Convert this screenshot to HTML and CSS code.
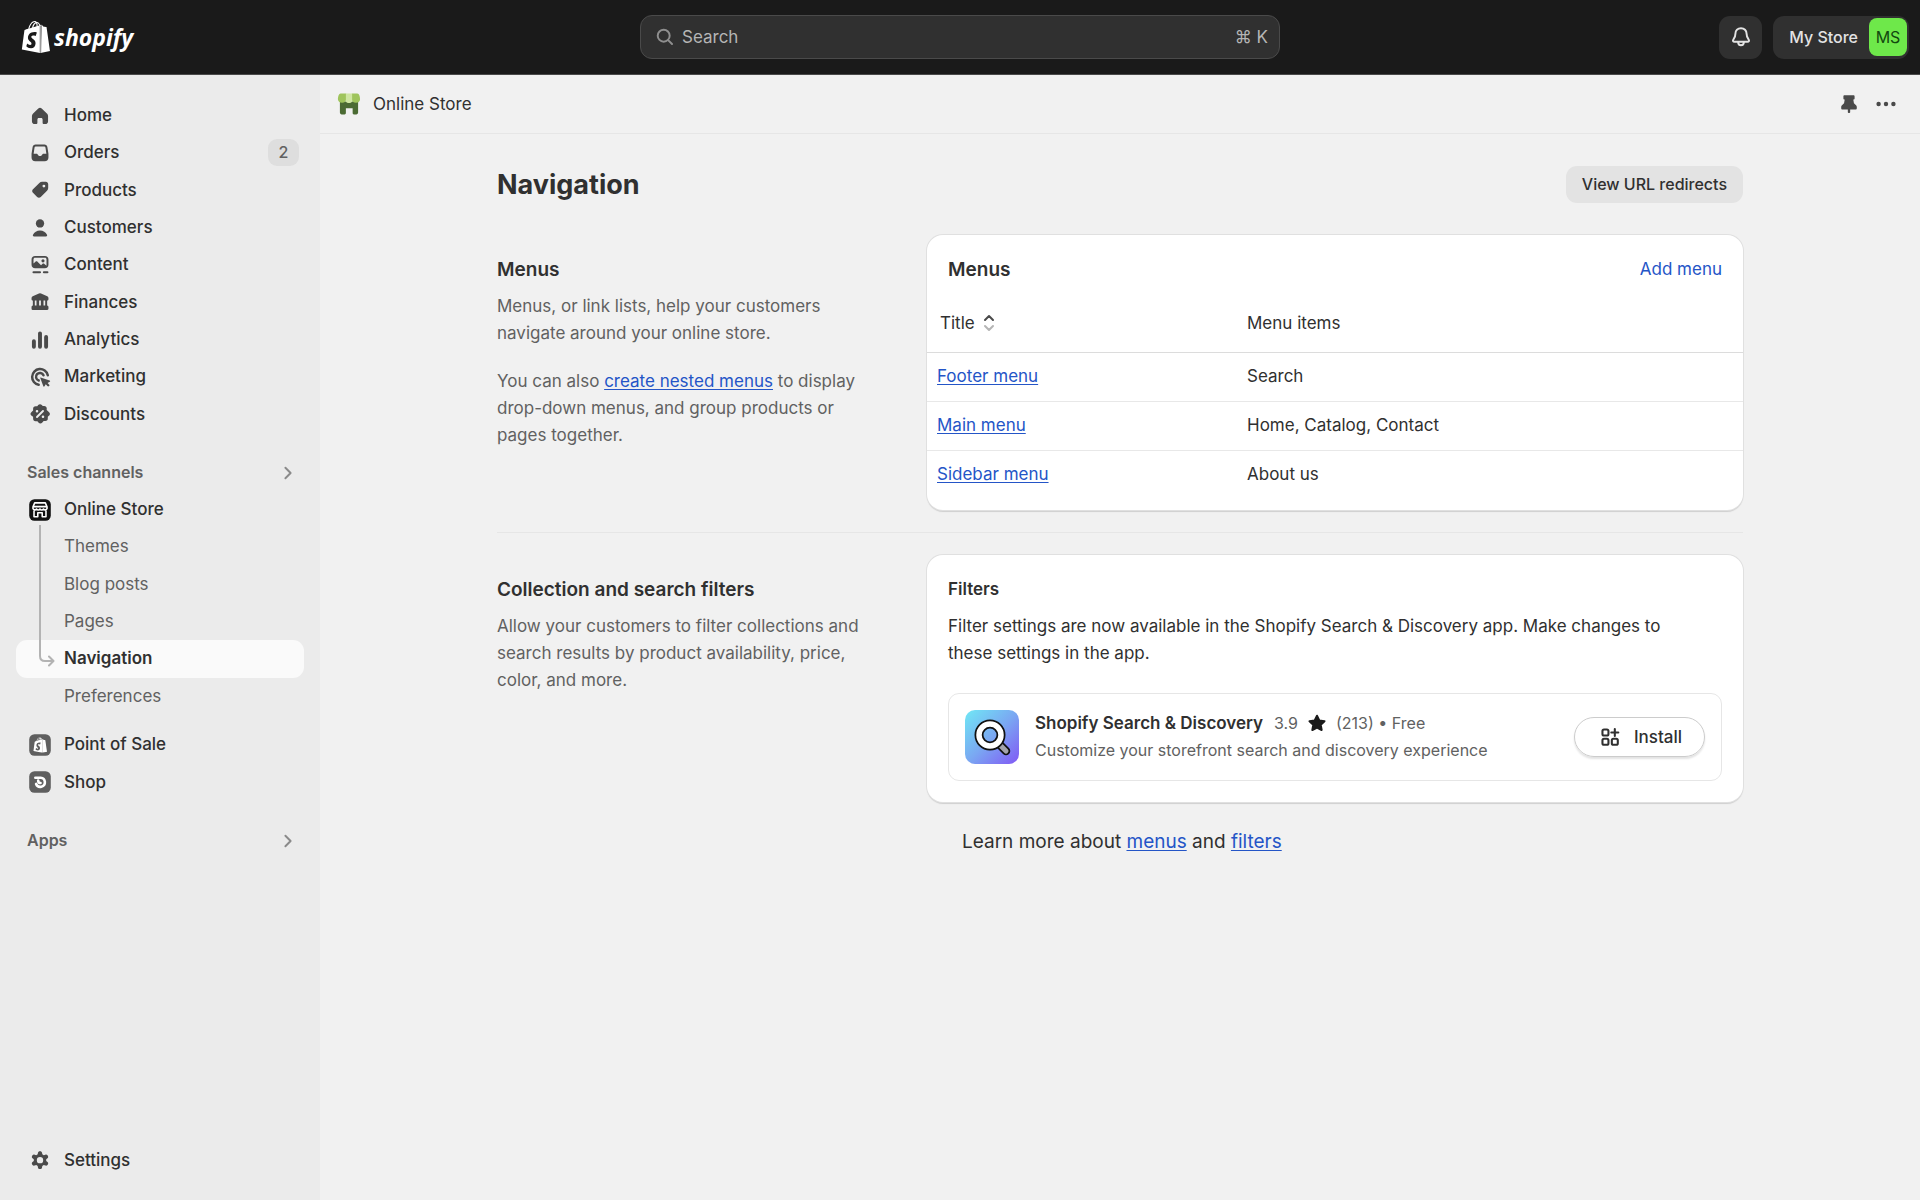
FILE: index.html
```html
<!DOCTYPE html>
<html lang="en">
<head>
<meta charset="utf-8">
<meta name="viewport" content="width=device-width, initial-scale=1">
<title>Navigation · My Store · Shopify</title>
<link rel="stylesheet" href="styles.css">
</head>
<body>
<svg class="sprite" aria-hidden="true">
  <symbol id="bag" viewBox="0 0 24 24">
    <path d="M15.337 23.979l7.216-1.561s-2.604-17.613-2.625-17.73c-.018-.116-.114-.192-.211-.192s-1.929-.136-1.929-.136-1.275-1.274-1.439-1.411c-.045-.037-.075-.057-.121-.074l-.914 21.104h.023zM11.71 11.305s-.81-.424-1.774-.424c-1.447 0-1.504.906-1.504 1.141 0 1.232 3.24 1.715 3.24 4.629 0 2.295-1.44 3.76-3.406 3.76-2.354 0-3.54-1.465-3.54-1.465l.646-2.086s1.245 1.066 2.28 1.066c.675 0 .975-.545.975-.932 0-1.619-2.654-1.694-2.654-4.359-.034-2.237 1.571-4.416 4.827-4.416 1.257 0 1.875.361 1.875.361l-.945 2.715-.02.01zM11.17.83c.136 0 .271.038.405.135-.984.465-2.064 1.639-2.508 3.992-.656.213-1.293.405-1.889.578C7.697 3.75 8.951.84 11.17.84V.83zm1.235 2.949v.135c-.754.232-1.583.484-2.394.736.466-1.777 1.333-2.645 2.085-2.971.193.501.309 1.176.309 2.1zm.539-2.234c.694.074 1.141.867 1.429 1.755-.349.114-.735.231-1.158.366v-.252c0-.752-.096-1.371-.271-1.871v.002zm2.992 1.289c-.02 0-.06.021-.078.021s-.289.075-.714.21c-.423-1.233-1.176-2.37-2.508-2.37h-.115C12.135.209 11.669 0 11.265 0 8.159 0 6.675 3.877 6.21 5.846c-1.194.365-2.063.636-2.16.674-.675.213-.694.232-.772.87-.075.462-1.83 14.063-1.83 14.063L15.009 24l.927-21.166z"/>
  </symbol>
  <symbol id="chevron" viewBox="0 0 20 20">
    <path d="M8 6l4 4-4 4" fill="none" stroke="currentColor" stroke-width="1.5" stroke-linecap="round" stroke-linejoin="round"/>
  </symbol>
</svg>

<header class="header">
  <a class="brand" href="#" aria-label="Shopify home">
    <svg class="brand-bag" viewBox="0 0 24 24" aria-hidden="true"><use href="#bag"/><path d="M14.700 3.300h1.800l-.6 20.300-1.200.3z" fill="#9a9a9a"/></svg>
    <span class="brand-name">shopify</span>
  </a>
  <label class="search">
    <svg class="icon" viewBox="0 0 20 20" aria-hidden="true"><g fill="none" stroke="currentColor" stroke-width="1.500" stroke-linecap="round"><circle cx="9" cy="9" r="4.600"/><path d="M12.400 12.400l3 3"/></g></svg>
    <input type="search" placeholder="Search" aria-label="Search">
    <kbd>⌘ K</kbd>
  </label>
  <div class="header-actions">
    <button class="bell" type="button" aria-label="Notifications">
      <svg class="icon" viewBox="0 0 20 20" aria-hidden="true"><g fill="none" stroke="currentColor" stroke-width="1.500" stroke-linejoin="round"><path d="M10 3.200c-2.500 0-4.300 1.900-4.300 4.300 0 2.400-.5 3.100-1.500 4.300-.8 1-.3 1.900.8 1.900h10c1.100 0 1.600-.9.800-1.900-1-1.200-1.500-1.900-1.500-4.300 0-2.400-1.800-4.300-4.300-4.300z"/><path d="M7.800 13.800c0 1.500.9 2.500 2.200 2.500s2.200-1 2.200-2.500"/></g></svg>
    </button>
    <button class="store" type="button"><span>My Store</span><span class="avatar">MS</span></button>
  </div>
</header>

<div class="shell">
  <nav class="sidebar" aria-label="Main">
    <ul class="nav nav-main">
      <li><a href="#"><svg class="icon" viewBox="0 0 20 20" aria-hidden="true"><path d="M8.700 4.200a1.900 1.900 0 0 1 2.600 0l4 3.800c.6.500.9 1.300.9 2v4c0 1.300-.8 2.200-2.200 2.200h-1c-.6 0-1-.4-1-1v-2.400c0-.8-.4-1.300-1.100-1.300h-1.800c-.7 0-1.100.5-1.100 1.300v2.400c0 .6-.4 1-1 1H6c-1.400 0-2.200-.9-2.200-2.200v-4c0-.7.3-1.500.9-2z"/></svg>Home</a></li>
      <li><a href="#"><svg class="icon" viewBox="0 0 20 20" aria-hidden="true"><path fill-rule="evenodd" d="M6.600 3.500h6.800c1.200 0 2.100.8 2.300 2l.8 5v3c0 1.700-1.100 2.900-2.900 2.900H6.400c-1.800 0-2.900-1.200-2.900-2.900v-3l.8-5c.2-1.200 1.100-2 2.300-2zM6.700 5c-.5 0-.8.300-.9.800l-.7 4.700h2c.8 0 1 .3 1.300.9.300.7.800 1 1.600 1s1.300-.3 1.600-1c.3-.6.5-.9 1.300-.9h2l-.7-4.700c-.1-.5-.4-.8-.9-.8z"/></svg>Orders<span class="badge">2</span></a></li>
      <li><a href="#"><svg class="icon" viewBox="0 0 20 20" aria-hidden="true"><path fill-rule="evenodd" d="M11.600 3.700h2.900c1 0 1.800.8 1.800 1.800v2.900c0 .8-.3 1.500-.9 2.100l-4.800 4.900c-.8.800-2 .8-2.800 0l-3.200-3.200c-.8-.8-.8-2 0-2.800l4.900-4.800c.6-.6 1.300-.9 2.100-.9zm1.400 4.400a1.100 1.100 0 1 0 0-2.200 1.100 1.100 0 0 0 0 2.200z"/></svg>Products</a></li>
      <li><a href="#"><svg class="icon" viewBox="0 0 20 20" aria-hidden="true"><circle cx="10" cy="6.500" r="3.200"/><path d="M4.600 15.200c.9-2 3-3.300 5.400-3.300s4.500 1.300 5.400 3.300c.3.700-.1 1.300-.8 1.300H5.400c-.7 0-1.100-.6-.8-1.300z"/></svg>Customers</a></li>
      <li><a href="#"><svg class="icon" viewBox="0 0 20 20" aria-hidden="true"><path fill-rule="evenodd" d="M6.200 3h7.600c1.600 0 2.700 1.100 2.700 2.700v4.100c0 1.600-1.100 2.700-2.700 2.700H6.200c-1.600 0-2.700-1.100-2.700-2.700V5.700C3.500 4.100 4.600 3 6.200 3zm0 1.500c-.7 0-1.200.5-1.200 1.200v3.100l1.500-1.300c.5-.4 1.100-.4 1.600 0l2.700 2.600 1-.9c.5-.4 1.100-.4 1.600 0l1.600 1.300V5.700c0-.7-.5-1.200-1.200-1.200z"/><circle cx="12.300" cy="6.800" r="1.200"/><path d="M5 15.600h5M13 15.600h2.700" stroke="currentColor" stroke-width="1.600" stroke-linecap="round"/></svg>Content</a></li>
      <li><a href="#"><svg class="icon" viewBox="0 0 20 20" aria-hidden="true"><path d="M9.200 3.500a2 2 0 0 1 1.600 0l4.800 2.100c.6.300.9.700.9 1.300v.9c0 .6-.4 1-1 1v3.900c.6.100 1 .6 1 1.200v1.300c0 .5-.4.900-.9.900H4.400a.9.900 0 0 1-.9-.9v-1.300c0-.6.400-1.100 1-1.200V8.800c-.6 0-1-.4-1-1v-.9c0-.6.300-1 .9-1.300zM6 8.800v3.900h1.300V8.800zm3.300 0v3.900h1.400V8.800zm3.400 0v3.900H14V8.800z"/></svg>Finances</a></li>
      <li><a href="#"><svg class="icon" viewBox="0 0 20 20" aria-hidden="true"><path d="M5.300 11v4.200M10 4.900v10.300M14.700 7.700v7.500" stroke="currentColor" stroke-width="3" stroke-linecap="round"/></svg>Analytics</a></li>
      <li><a href="#"><svg class="icon" viewBox="0 0 20 20" aria-hidden="true"><g fill="none" stroke="currentColor" stroke-width="1.900" stroke-linecap="round"><path d="M16 8.600A6.100 6.100 0 1 0 9 16"/><path d="M12.700 8.700A3 3 0 1 0 9 12.700"/></g><path d="M10.500 10.400l6.900 2.300c.5.200.6.800.1 1l-1.700.9 1.300 1.400c.4.400.1 1-.4 1.200-.4.200-.7.100-1-.2l-1.300-1.400-.9 1.500c-.3.500-.9.400-1-.1l-2.300-6.200c-.1-.3 0-.5.300-.4z"/></svg>Marketing</a></li>
      <li><a href="#"><svg class="icon" viewBox="0 0 20 20" aria-hidden="true"><path d="M8.600 3.100c.8-.9 2-.9 2.800 0l.7.800 1.100-.1c1.200 0 2 .8 2 2l-.1 1.100.9.700c1.200 1 1.800 1.600 1.600 2.500-.1.500-.4.900-.8 1.300l-.8.800v1.100c.1 1.300-.6 2.100-1.900 2.100h-1.300l-1 1.100c-.9 1.100-2.100 1.100-3 0l-.8-1H6.600c-1.200 0-2-.8-1.900-2v-1.300l-1.200-.9c-1.100-.9-1.100-2 0-2.900l1.200-1V6.200c-.1-1.400.6-2.200 2-2.200h1.200z"/><g stroke="#ebebeb" fill="#ebebeb" stroke-linecap="round"><path d="M7.700 12.300l4.600-4.600" stroke-width="1.500"/><circle cx="7.700" cy="7.900" r=".5"/><circle cx="12.300" cy="12.100" r=".5"/></g></svg>Discounts</a></li>
    </ul>

    <button class="group" type="button">Sales channels<svg class="icon" aria-hidden="true"><use href="#chevron"/></svg></button>
    <ul class="nav nav-store">
      <li><a href="#"><svg class="icon" viewBox="0 0 20 20" aria-hidden="true"><rect x="1.700" y="1.700" width="16.600" height="16.600" rx="4" fill="#111"/><g fill="none" stroke="#fff" stroke-width="1.200" stroke-linejoin="round"><path d="M5.900 4.500h8.200l1.300 3v1.300a1.500 1.500 0 0 1-2.700.4 1.600 1.600 0 0 1-2.700 0 1.600 1.600 0 0 1-2.700 0 1.500 1.500 0 0 1-2.700-.4V7.500zM4.800 7.400h10.400M5.400 9.900v5.300h2.900v-3.100h3.400v3.100h2.900V9.900"/></g></svg>Online Store</a></li>
      <li class="sub"><a href="#">Themes</a></li>
      <li class="sub"><a href="#">Blog posts</a></li>
      <li class="sub"><a href="#">Pages</a></li>
      <li class="sub current"><a href="#" aria-current="page">Navigation</a>
        <svg class="trail" viewBox="0 0 18 142" aria-hidden="true"><path d="M2 0v131q0 5 5 5h8M11 131.500l4.500 4.500-4.500 4.500" fill="none" stroke="#b3b3b3" stroke-width="2" stroke-linecap="round" stroke-linejoin="round"/></svg>
      </li>
      <li class="sub"><a href="#">Preferences</a></li>
    </ul>
    <ul class="nav nav-channels">
      <li><a href="#"><svg class="icon" viewBox="0 0 20 20" aria-hidden="true"><rect x="1.700" y="1.700" width="16.600" height="16.600" rx="4" fill="#5f5f5f"/><use href="#bag" x="4.300" y="4" width="11.800" height="12" fill="#fff"/></svg>Point of Sale</a></li>
      <li><a href="#"><svg class="icon" viewBox="0 0 20 20" aria-hidden="true"><rect x="1.700" y="1.700" width="16.600" height="16.600" rx="4" fill="#5f5f5f"/><path d="M6.400 6.700h4.100a3.500 3.500 0 1 1-3.500 4.800M8.600 8.800q0 2 1.800 2" fill="none" stroke="#fff" stroke-width="2" stroke-linecap="round"/></svg>Shop</a></li>
    </ul>
    <button class="group" type="button">Apps<svg class="icon" aria-hidden="true"><use href="#chevron"/></svg></button>
    <ul class="nav nav-foot">
      <li><a href="#"><svg class="icon" viewBox="1 1 18 18" aria-hidden="true"><path fill-rule="evenodd" d="M8.600 4.300c.1-.7.600-1.100 1.200-1.100h.4c.6 0 1.100.4 1.200 1.100l.2 1.100 1 .6 1.100-.4c.6-.2 1.200 0 1.500.5l.3.400c.3.600.2 1.200-.3 1.600l-.9.700v1.200l.9.700c.5.400.6 1 .3 1.600l-.3.400c-.3.500-.9.700-1.500.5l-1.100-.4-1 .6-.2 1.100c-.1.700-.6 1.100-1.200 1.100h-.4c-.6 0-1.100-.4-1.200-1.100l-.2-1.100-1-.6-1.100.4c-.6.200-1.200 0-1.500-.5l-.3-.4c-.3-.6-.2-1.200.3-1.600l.9-.7V8.800l-.9-.7c-.5-.4-.6-1-.3-1.600l.3-.4c.3-.5.9-.7 1.500-.5l1.100.4 1-.6zM10 11.600a2.200 2.200 0 1 0 0-4.400 2.200 2.200 0 0 0 0 4.400z"/></svg>Settings</a></li>
    </ul>
  </nav>

  <main class="main">
    <div class="titlebar">
      <svg class="icon" viewBox="0 0 20 20" aria-hidden="true"><path d="M3 8h14v8.600c0 .9-.6 1.400-1.400 1.400h-1.800c-.6 0-1-.4-1-1v-3.700H7.600V17c0 .6-.4 1-1 1H4.400c-.8 0-1.400-.5-1.400-1.400z" fill="#4b6b33"/><path d="M3.600 2h4.200v4.500a3.200 2.900 0 0 1-6.300.200c0-2 .6-4.700 2.100-4.700z" fill="#9fc45c"/><path d="M16.400 2h-4.200v4.500a3.200 2.900 0 0 0 6.300.200c0-2-.6-4.700-2.100-4.700z" fill="#9fc45c"/><path d="M7.600 2h4.800v6c-1 1.700-3.800 1.700-4.800 0z" fill="#cfe6a2"/></svg>
      <span>Online Store</span>
      <div class="titlebar-tools">
        <button type="button" aria-label="Pin"><svg class="icon" viewBox="0 0 20 20" aria-hidden="true"><path d="M6.500 3.300h7c.5 0 .8.400.8.800v1.700c0 .5-.3.800-.8.800h-.2l.5 2.900 1.600 1.500c.4.400.6.900.6 1.400v.9c0 .6-.4 1-1 1h-4.100v1.800c0 .5-.4.900-.9.900s-.9-.4-.9-.9v-1.800H5c-.6 0-1-.4-1-1v-.9c0-.5.200-1 .6-1.400l1.600-1.500.5-2.900h-.2c-.5 0-.8-.3-.8-.8V4.100c0-.4.300-.8.800-.8z"/></svg></button>
        <button type="button" aria-label="More actions"><svg class="icon" viewBox="0 0 20 20" aria-hidden="true"><circle cx="4.300" cy="10" r="1.700"/><circle cx="10" cy="10" r="1.700"/><circle cx="15.700" cy="10" r="1.700"/></svg></button>
      </div>
    </div>

    <div class="page">
      <div class="page-head">
        <h1>Navigation</h1>
        <button class="btn-secondary" type="button">View URL redirects</button>
      </div>

      <section class="annotated">
        <div class="about">
          <h2>Menus</h2>
          <p>Menus, or link lists, help your customers navigate around your online store.</p>
          <p>You can also <a href="#">create nested menus</a> to display drop-down menus, and group products or pages together.</p>
        </div>
        <div class="card card-menus">
          <div class="card-head">
            <h2>Menus</h2>
            <a class="plain" href="#">Add menu</a>
          </div>
          <table>
            <thead>
              <tr>
                <th scope="col"><button class="sort" type="button">Title<svg viewBox="0 0 12 18" aria-hidden="true"><g fill="none" stroke-width="2" stroke-linecap="round" stroke-linejoin="round"><path d="M2 6l4-4 4 4" stroke="#4a4a4a"/><path d="M2 12l4 4 4-4" stroke="#b5b5b5"/></g></svg></button></th>
                <th scope="col">Menu items</th>
              </tr>
            </thead>
            <tbody>
              <tr><td><a href="#">Footer menu</a></td><td>Search</td></tr>
              <tr><td><a href="#">Main menu</a></td><td>Home, Catalog, Contact</td></tr>
              <tr><td><a href="#">Sidebar menu</a></td><td>About us</td></tr>
            </tbody>
          </table>
        </div>
      </section>

      <section class="annotated">
        <div class="about">
          <h2>Collection and search filters</h2>
          <p>Allow your customers to filter collections and search results by product availability, price, color, and more.</p>
        </div>
        <div class="card card-filters">
          <h3>Filters</h3>
          <p class="card-text">Filter settings are now available in the Shopify Search &amp; Discovery app. Make changes to these settings in the app.</p>
          <div class="app">
            <svg class="app-icon" viewBox="0 0 54 54" aria-hidden="true">
              <defs><linearGradient id="tile" x1="0" y1="0" x2="1" y2="1"><stop offset="0" stop-color="#70e8f5"/><stop offset=".5" stop-color="#7aa8f2"/><stop offset="1" stop-color="#8158f5"/></linearGradient></defs>
              <rect width="54" height="54" rx="10" fill="url(#tile)"/>
              <path d="M35 35l6 6" stroke="#111" stroke-width="8.500" stroke-linecap="round"/>
              <path d="M35.500 35.500l5.500 5.500" stroke="#a3a3ab" stroke-width="5" stroke-linecap="round"/>
              <circle cx="25" cy="25" r="11" fill="none" stroke="#111" stroke-width="9"/>
              <circle cx="25" cy="25" r="11" fill="none" stroke="#fff" stroke-width="5.500"/>
            </svg>
            <div class="app-info">
              <div class="app-title">
                <strong>Shopify Search &amp; Discovery</strong>
                <span class="rating">3.9 <svg class="icon star" viewBox="0 0 20 20" role="img" aria-label="stars"><path d="M10 4.400l1.800 3.700 4 .5-2.900 2.800.7 4-3.600-1.900-3.600 1.900.7-4-2.900-2.800 4-.5z" stroke="currentColor" stroke-width="1.500" stroke-linejoin="round"/></svg> (213) • Free</span>
              </div>
              <p>Customize your storefront search and discovery experience</p>
            </div>
            <button class="install" type="button"><svg class="icon" viewBox="0 0 20 20" aria-hidden="true"><g fill="none" stroke="currentColor" stroke-width="1.600" stroke-linecap="round"><rect x="4.200" y="4.200" width="4.600" height="4.600" rx="1.200"/><rect x="4.200" y="11.400" width="4.600" height="4.600" rx="1.200"/><rect x="11.400" y="11.400" width="4.600" height="4.600" rx="1.200"/><path d="M13.700 3.800v5.400M11 6.500h5.400"/></g></svg>Install</button>
          </div>
        </div>
      </section>

      <p class="learn">Learn more about <a href="#">menus</a> and <a href="#">filters</a></p>
    </div>
  </main>
</div>
</body>
</html>
```
FILE: styles.css
```css
* { box-sizing: border-box; }

body {
  margin: 0;
  min-height: 100vh;
  display: flex;
  flex-direction: column;
  background: #f1f1f1;
  color: #303030;
  font: 17px/27px Inter, "Liberation Sans", sans-serif;
}

h1, h2, h3, p, ul { margin: 0; padding: 0; }
ul { list-style: none; }
a { color: #2455c7; text-underline-offset: 2px; }
button {
  border: 0;
  padding: 0;
  background: none;
  color: inherit;
  font: inherit;
  cursor: pointer;
}

.sprite { position: absolute; width: 0; height: 0; }
.icon { width: 26px; height: 26px; flex: none; fill: currentColor; display: block; }

/* Header */
.header {
  display: grid;
  grid-template-columns: 1fr 640px 1fr;
  align-items: center;
  height: 75px;
  padding: 0 11px;
  background: #1a1a1a;
  border-bottom: 1px solid #4a4a4a;
}
.brand { display: flex; align-items: center; gap: 2px; padding-left: 9px; color: #fff; text-decoration: none; }
.brand-bag { width: 32px; height: 32px; fill: #fff; }
.brand-name { font: italic bold 23px/32px "Open Sans", sans-serif; }
.search {
  display: flex;
  align-items: center;
  gap: 4px;
  height: 44px;
  padding: 0 11px;
  border: 1px solid #4a4a4a;
  border-radius: 12px;
  background: #303030;
  color: #b5b5b5;
}
.search .icon { color: #8f8f8f; }
.search input {
  flex: 1;
  min-width: 0;
  border: 0;
  padding: 0;
  background: none;
  color: #fff;
  font: inherit;
  font-size: 17px;
  outline: none;
}
.search input::placeholder { color: #b5b5b5; opacity: 1; }
.search kbd { font: inherit; font-size: 17px; }
.header-actions { display: flex; justify-content: flex-end; gap: 11px; }
.bell, .store { display: flex; align-items: center; height: 43px; border-radius: 11px; background: #303030; color: #e3e3e3; }
.bell { justify-content: center; width: 43px; }
.store { gap: 11px; padding: 0 2px 0 16px; font-size: 16px; font-weight: 500; }
.avatar {
  width: 38px;
  height: 38px;
  border-radius: 8px;
  background: #6ee84a;
  color: #12490f;
  font-weight: 400;
  line-height: 38px;
}

/* Shell */
.shell { flex: 1; display: flex; }
.sidebar {
  width: 320px;
  flex: none;
  display: flex;
  flex-direction: column;
  padding: 22px 16px 21px;
  background: #ebebeb;
}
.nav { display: grid; grid-auto-rows: 1fr; }
.nav-main { height: 336px; }
.nav-store { height: 224px; }
.nav-channels { height: 75px; margin-top: 11px; }
.nav-foot { height: 37px; margin-top: auto; }
.nav a {
  display: flex;
  align-items: center;
  gap: 11px;
  height: 100%;
  padding: 0 5px 0 11px;
  border-radius: 11px;
  color: #303030;
  font-weight: 500;
  text-decoration: none;
}
.nav .icon { color: #4a4a4a; }
.nav .sub { position: relative; }
.nav .sub a { padding-left: 48px; color: #616161; font-weight: 400; }
.nav .current a { background: #fafafa; color: #303030; font-weight: 600; }
.trail { position: absolute; left: 22px; bottom: 11px; width: 18px; height: 142px; }
.badge {
  margin-left: auto;
  min-width: 31px;
  border-radius: 9px;
  background: #dedede;
  color: #616161;
  font-size: 16px;
  text-align: center;
}
.group {
  display: flex;
  align-items: center;
  justify-content: space-between;
  height: 37px;
  margin-top: 21px;
  padding: 0 3px 0 11px;
  color: #616161;
  font-size: 16px;
  font-weight: 600;
}
.group .icon { color: #8a8a8a; }

/* Main column */
.main { flex: 1; min-width: 0; }
.titlebar {
  display: flex;
  align-items: center;
  gap: 11px;
  height: 59px;
  padding: 0 21px 0 16px;
  border-bottom: 1px solid #e6e6e6;
}
.titlebar-tools { display: flex; gap: 11px; margin-left: auto; color: #4a4a4a; }
.page { max-width: 1288px; margin: 0 auto; padding: 32px 21px; }
.page-head { display: flex; justify-content: space-between; align-items: center; margin-bottom: 32px; }
.page-head h1 { font-size: 27px; line-height: 32px; font-weight: 700; }
.btn-secondary {
  height: 37px;
  padding: 0 16px;
  border-radius: 11px;
  background: #e3e3e3;
  font-size: 16px;
  font-weight: 500;
}
.annotated { display: grid; grid-template-columns: 1fr 2fr; gap: 22px; align-items: start; }
.annotated + .annotated { margin-top: 22px; padding-top: 22px; border-top: 1px solid #e6e6e6; }
.about { padding: 21px 21px 0 0; color: #616161; }
.about h2 { margin-bottom: 10px; color: #303030; }
.about p + p { margin-top: 21px; }
h2, h3 { font-size: 19px; line-height: 27px; font-weight: 600; }
h3 { font-size: 17px; }

.card {
  overflow: hidden;
  border-radius: 16px;
  background: #fff;
  box-shadow: 0 0 0 1px #e0e0e0, 0 2px 1px #cfcfcf;
}
.card-menus { padding: 21px 0 11px; }
.card-head { display: flex; justify-content: space-between; padding: 0 21px; }
.plain { text-decoration: none; }

table { width: 100%; border-collapse: collapse; table-layout: fixed; }
th, td { height: 49px; padding: 0 10px; text-align: left; font-weight: 400; }
th { height: 69px; padding-top: 12px; border-bottom: 1px solid #dcdcdc; }
th:first-child, td:first-child { width: 310px; }
tr + tr td { border-top: 1px solid #e8e8e8; }
.sort { display: flex; align-items: center; gap: 8px; padding-left: 3px; }
.sort svg { width: 12px; height: 18px; }

.card-filters { padding: 21px; }
.card-filters h3 { margin-bottom: 10px; }
.card-text { padding-right: 21px; }
.app {
  display: flex;
  align-items: center;
  gap: 16px;
  margin-top: 26px;
  padding: 16px;
  border: 1px solid #e6e6e6;
  border-radius: 11px;
}
.app-icon { width: 54px; height: 54px; flex: none; }
.app-info { flex: 1; color: #616161; font-size: 16px; }
.app-title { display: flex; gap: 11px; }
.app-title strong { color: #303030; font-size: 17px; font-weight: 600; }
.rating { display: flex; gap: 6px; }
.star { color: #1a1a1a; }
.install {
  display: flex;
  align-items: center;
  gap: 11px;
  height: 40px;
  padding: 0 22px;
  border: 1px solid #ccc;
  border-radius: 20px;
  box-shadow: 0 2px 2px #e3e3e3;
  font-weight: 500;
}
.learn { margin-top: 26px; padding-left: 465px; font-size: 19px; }
```
